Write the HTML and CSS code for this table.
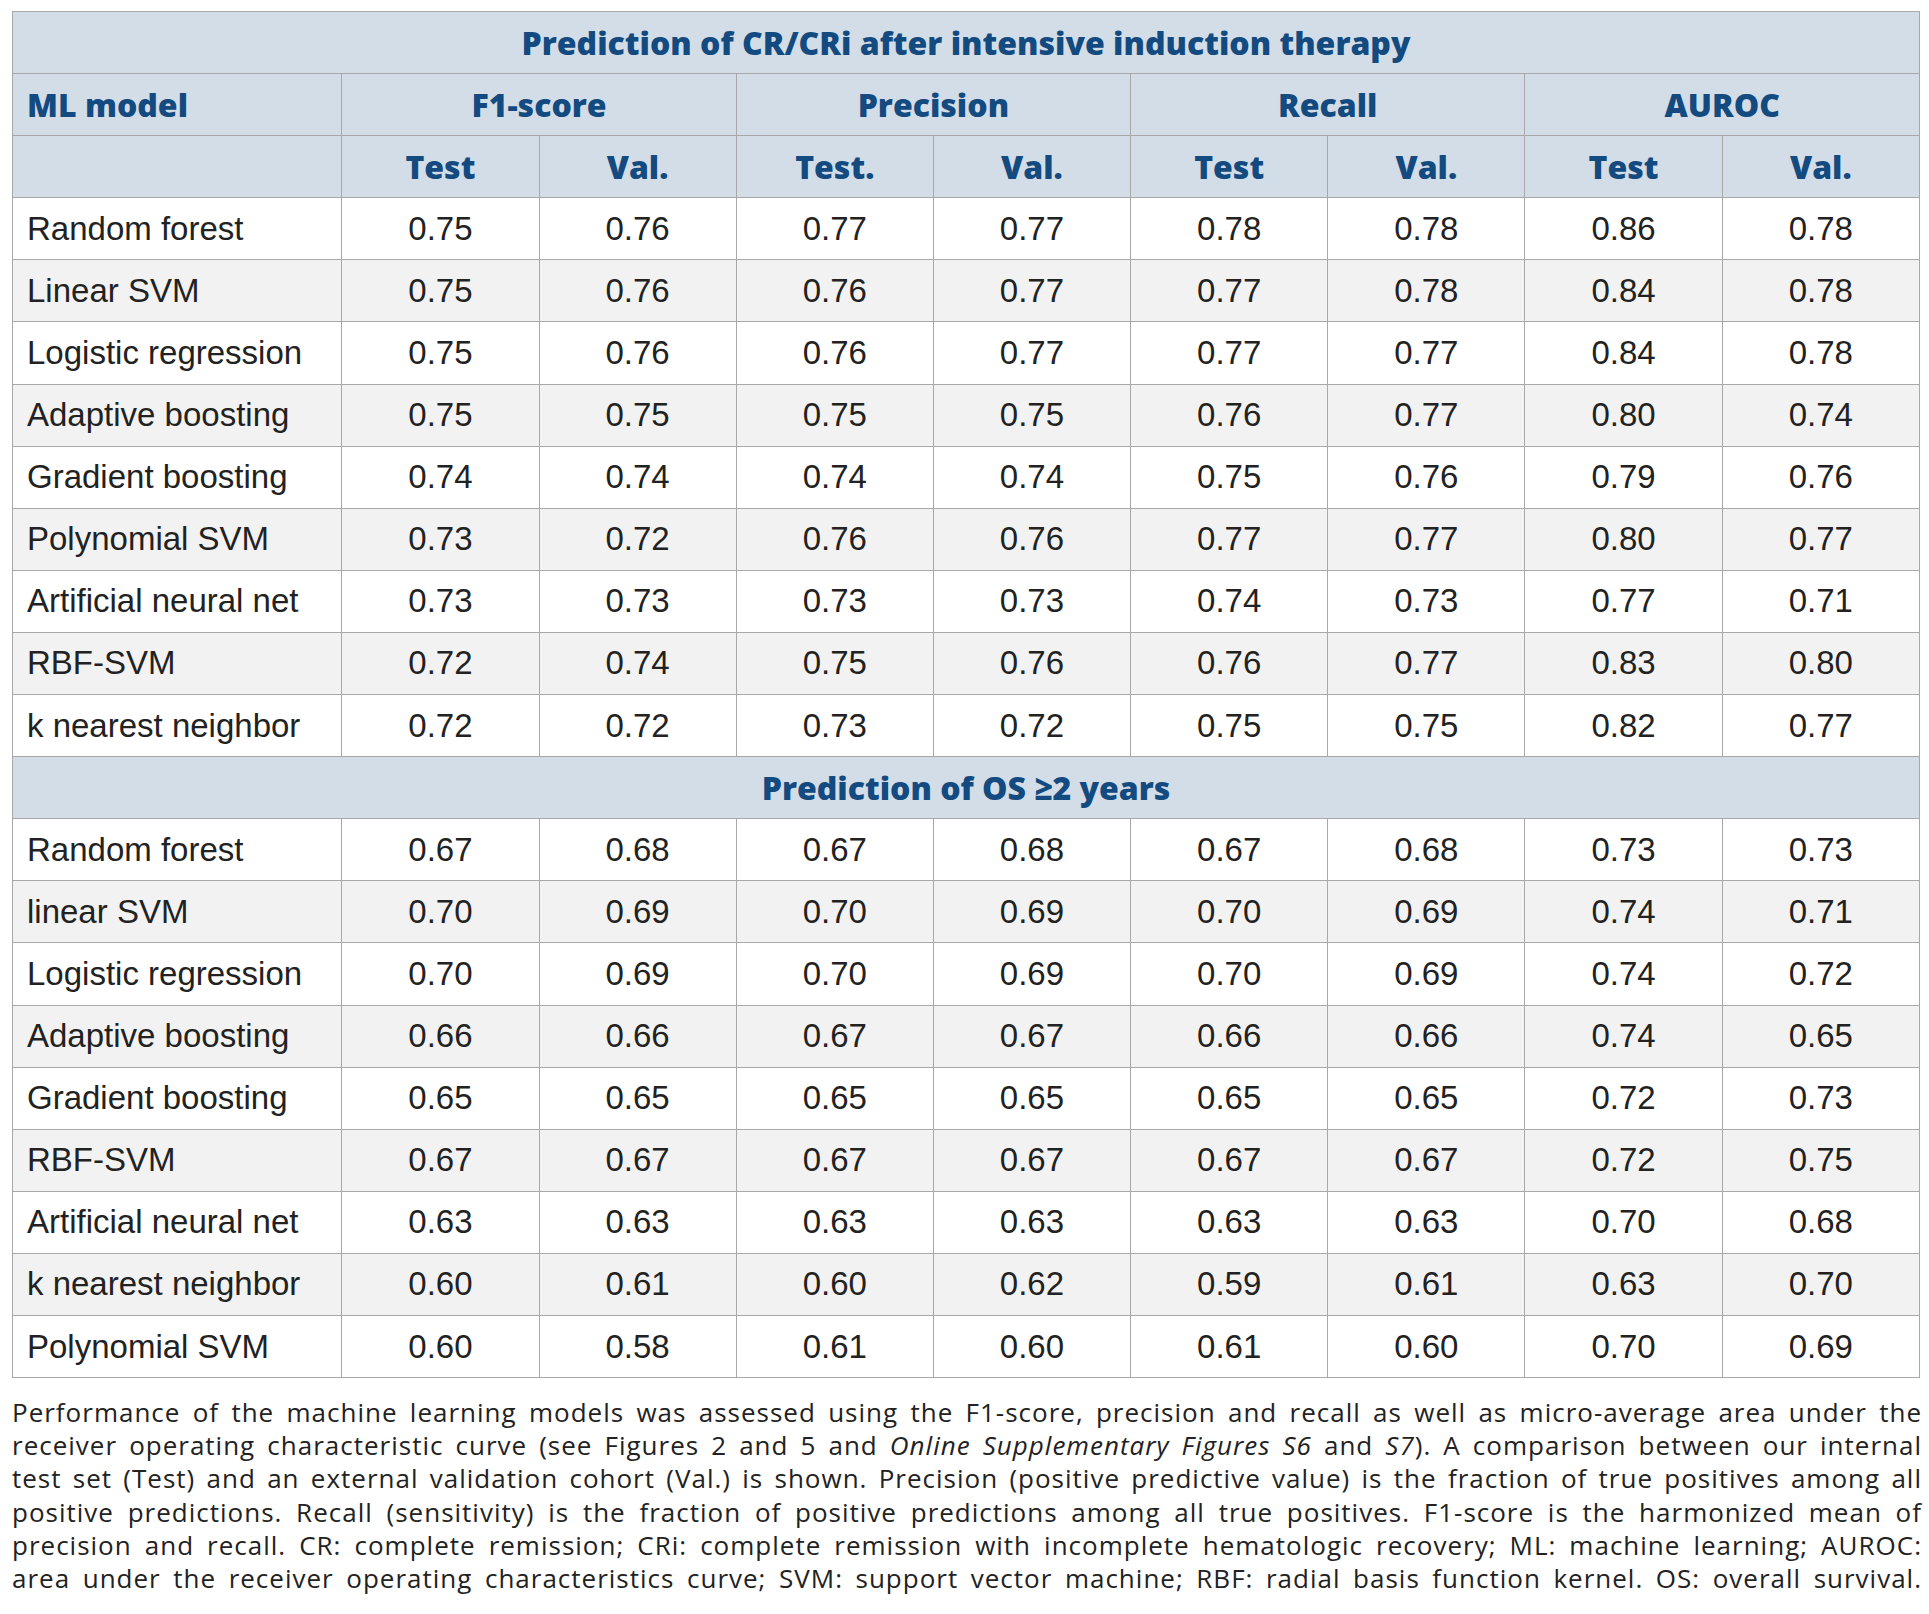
FILE: index.html
```html
<!DOCTYPE html>
<html lang="en">
<head>
<meta charset="utf-8">
<title>Prediction table</title>
<link rel="stylesheet" href="styles.css">
</head>
<body>
<main class="page">
<table class="results">
  <colgroup>
    <col class="c-model"><col class="c-val"><col class="c-val"><col class="c-val"><col class="c-val"><col class="c-val"><col class="c-val"><col class="c-val"><col class="c-val">
  </colgroup>
  <thead>
    <tr class="hrow"><th colspan="9" class="section">Prediction of CR/CRi after intensive induction therapy</th></tr>
    <tr class="hrow"><th class="first">ML model</th><th colspan="2">F1-score</th><th colspan="2">Precision</th><th colspan="2">Recall</th><th colspan="2">AUROC</th></tr>
    <tr class="hrow"><th class="first"></th><th>Test</th><th>Val.</th><th>Test.</th><th>Val.</th><th>Test</th><th>Val.</th><th>Test</th><th>Val.</th></tr>
  </thead>
  <tbody>
    <tr><td>Random forest</td><td>0.75</td><td>0.76</td><td>0.77</td><td>0.77</td><td>0.78</td><td>0.78</td><td>0.86</td><td>0.78</td></tr>
    <tr class="alt"><td>Linear SVM</td><td>0.75</td><td>0.76</td><td>0.76</td><td>0.77</td><td>0.77</td><td>0.78</td><td>0.84</td><td>0.78</td></tr>
    <tr><td>Logistic regression</td><td>0.75</td><td>0.76</td><td>0.76</td><td>0.77</td><td>0.77</td><td>0.77</td><td>0.84</td><td>0.78</td></tr>
    <tr class="alt"><td>Adaptive boosting</td><td>0.75</td><td>0.75</td><td>0.75</td><td>0.75</td><td>0.76</td><td>0.77</td><td>0.80</td><td>0.74</td></tr>
    <tr><td>Gradient boosting</td><td>0.74</td><td>0.74</td><td>0.74</td><td>0.74</td><td>0.75</td><td>0.76</td><td>0.79</td><td>0.76</td></tr>
    <tr class="alt"><td>Polynomial SVM</td><td>0.73</td><td>0.72</td><td>0.76</td><td>0.76</td><td>0.77</td><td>0.77</td><td>0.80</td><td>0.77</td></tr>
    <tr><td>Artificial neural net</td><td>0.73</td><td>0.73</td><td>0.73</td><td>0.73</td><td>0.74</td><td>0.73</td><td>0.77</td><td>0.71</td></tr>
    <tr class="alt"><td>RBF-SVM</td><td>0.72</td><td>0.74</td><td>0.75</td><td>0.76</td><td>0.76</td><td>0.77</td><td>0.83</td><td>0.80</td></tr>
    <tr><td>k nearest neighbor</td><td>0.72</td><td>0.72</td><td>0.73</td><td>0.72</td><td>0.75</td><td>0.75</td><td>0.82</td><td>0.77</td></tr>
    <tr class="hrow"><th colspan="9" class="section">Prediction of OS ≥2 years</th></tr>
    <tr><td>Random forest</td><td>0.67</td><td>0.68</td><td>0.67</td><td>0.68</td><td>0.67</td><td>0.68</td><td>0.73</td><td>0.73</td></tr>
    <tr class="alt"><td>linear SVM</td><td>0.70</td><td>0.69</td><td>0.70</td><td>0.69</td><td>0.70</td><td>0.69</td><td>0.74</td><td>0.71</td></tr>
    <tr><td>Logistic regression</td><td>0.70</td><td>0.69</td><td>0.70</td><td>0.69</td><td>0.70</td><td>0.69</td><td>0.74</td><td>0.72</td></tr>
    <tr class="alt"><td>Adaptive boosting</td><td>0.66</td><td>0.66</td><td>0.67</td><td>0.67</td><td>0.66</td><td>0.66</td><td>0.74</td><td>0.65</td></tr>
    <tr><td>Gradient boosting</td><td>0.65</td><td>0.65</td><td>0.65</td><td>0.65</td><td>0.65</td><td>0.65</td><td>0.72</td><td>0.73</td></tr>
    <tr class="alt"><td>RBF-SVM</td><td>0.67</td><td>0.67</td><td>0.67</td><td>0.67</td><td>0.67</td><td>0.67</td><td>0.72</td><td>0.75</td></tr>
    <tr><td>Artificial neural net</td><td>0.63</td><td>0.63</td><td>0.63</td><td>0.63</td><td>0.63</td><td>0.63</td><td>0.70</td><td>0.68</td></tr>
    <tr class="alt"><td>k nearest neighbor</td><td>0.60</td><td>0.61</td><td>0.60</td><td>0.62</td><td>0.59</td><td>0.61</td><td>0.63</td><td>0.70</td></tr>
    <tr><td>Polynomial SVM</td><td>0.60</td><td>0.58</td><td>0.61</td><td>0.60</td><td>0.61</td><td>0.60</td><td>0.70</td><td>0.69</td></tr>
  </tbody>
</table>
<div class="caption">
  <div class="line">Performance of the machine learning models was assessed using the F1-score, precision and recall as well as micro-average area under the</div>
  <div class="line">receiver operating characteristic curve (see Figures 2 and 5 and <i>Online Supplementary Figures S6</i> and <i>S7</i>). A comparison between our internal</div>
  <div class="line">test set (Test) and an external validation cohort (Val.) is shown. Precision (positive predictive value) is the fraction of true positives among all</div>
  <div class="line">positive predictions. Recall (sensitivity) is the fraction of positive predictions among all true positives. F1-score is the harmonized mean of</div>
  <div class="line">precision and recall. CR: complete remission; CRi: complete remission with incomplete hematologic recovery; ML: machine learning; AUROC:</div>
  <div class="line">area under the receiver operating characteristics curve; SVM: support vector machine; RBF: radial basis function kernel. OS: overall survival.</div>
</div>
</main>
</body>
</html>
```

FILE: styles.css
```css
html, body {
  margin: 0;
  padding: 0;
  background: #ffffff;
}

.page {
  padding: 11px 9px 0 12px;
}

.results {
  width: 1908px;
  border-collapse: collapse;
  table-layout: fixed;
  border: 1px solid #a3a3a3;
}

.c-model { width: 329px; }
.c-val { width: 197px; }

.results th,
.results td {
  border: 1px solid #a8a8a8;
  height: 62.1px;
  padding: 0;
  box-sizing: border-box;
}

.results th {
  background: #d3dde7;
  color: #134a80;
  font-family: "Open Sans", "Noto Sans", sans-serif;
  font-weight: 800;
  font-size: 32px;
  text-align: center;
}

.results th.first {
  text-align: left;
  padding-left: 14px;
}

.results td {
  font-family: "Liberation Sans", Arial, sans-serif;
  font-size: 33px;
  color: #222222;
  text-align: center;
  background: #ffffff;
}

.results td:first-child {
  text-align: left;
  padding-left: 14px;
}

.results tr.alt td {
  background: #f2f2f2;
}

.caption {
  margin-top: 18px;
  width: 1910px;
  font-family: "Open Sans", "Noto Sans", sans-serif;
  font-size: 26px;
  letter-spacing: 1px;
  line-height: 33.2px;
  color: #222222;
}

.caption .line {
  white-space: nowrap;
  text-align: justify;
  text-align-last: justify;
}
```
